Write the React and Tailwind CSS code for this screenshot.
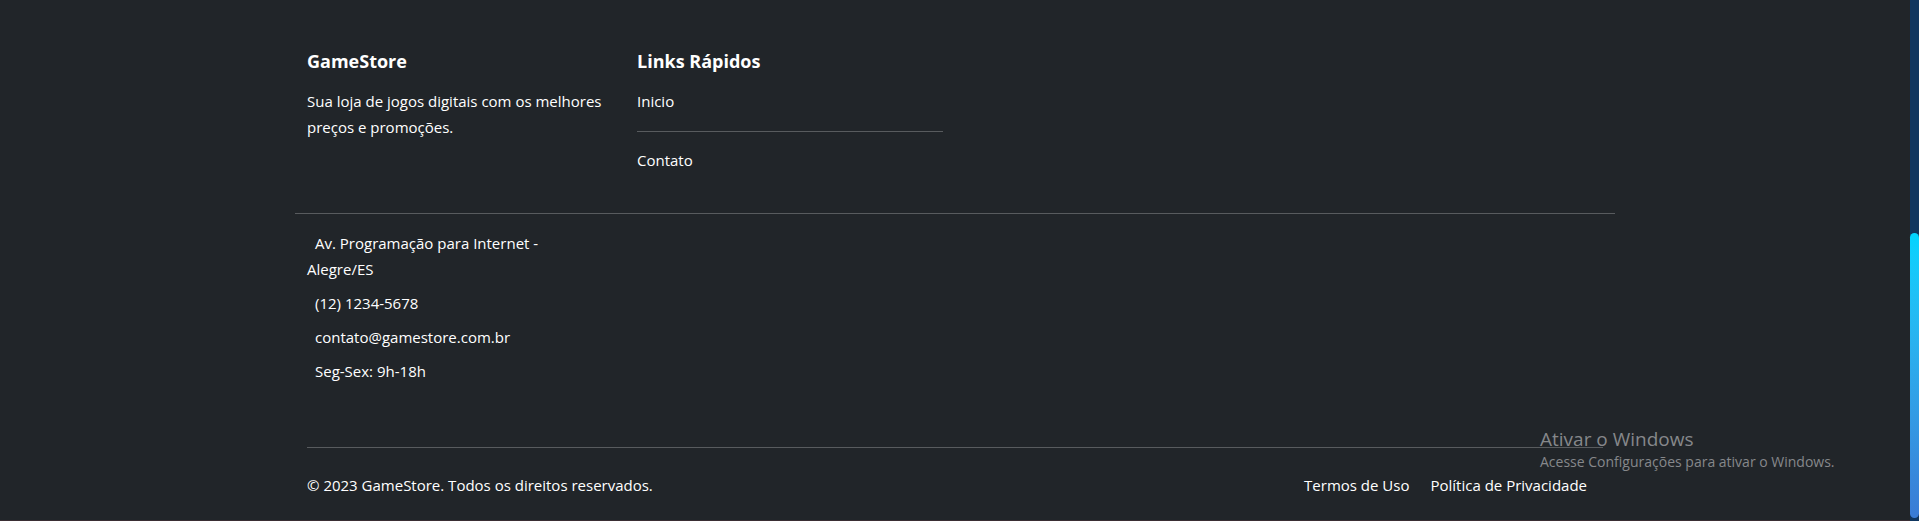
import React from "react";

export default function App() {
  const links = ["Inicio", "Contato"];

  const contacts = [
    "Av. Programação para Internet - Alegre/ES",
    "(12) 1234-5678",
    "contato@gamestore.com.br",
    "Seg-Sex: 9h-18h",
  ];

  return (
    <div
      className="flex h-[521px] w-full overflow-hidden bg-[#212529] text-white"
      style={{ fontFamily: '"Open Sans", "Noto Sans", sans-serif' }}
    >
      <div className="relative flex-1 border-b border-[#3a2e34]">
        <footer className="mx-auto w-[1320px] px-3 pt-[49px] text-[15px] leading-[25.6px]">
          {/* top row */}
          <div className="flex mb-[40px]">
            <div className="w-[330px] pr-6">
              <h5 className="text-[18px] leading-[24px] font-bold mb-4">GameStore</h5>
              <p>Sua loja de jogos digitais com os melhores preços e promoções.</p>
            </div>
            <div className="w-[306px]">
              <h5 className="text-[18px] leading-[24px] font-bold mb-4">Links Rápidos</h5>
              <ul>
                <li>
                  <a href="#">{links[0]}</a>
                </li>
                <li className="my-4 h-px bg-white/25"></li>
                <li>
                  <a href="#">{links[1]}</a>
                </li>
              </ul>
            </div>
          </div>

          <hr className="-mx-3 border-0 h-px bg-white/25" />

          {/* contact */}
          <ul className="mt-[17px] w-[292px]">
            {contacts.map((c) => (
              <li key={c} className="mb-[8.5px]">
                <span className="inline-block mr-2"></span>
                {c}
              </li>
            ))}
          </ul>

          <hr className="mt-[62px] border-0 h-px bg-white/25" />

          <div className="flex items-center justify-between pt-[25px]">
            <p>© 2023 GameStore. Todos os direitos reservados.</p>
            <ul className="flex gap-[21px] pr-4">
              <li>
                <a href="#">Termos de Uso</a>
              </li>
              <li>
                <a href="#">Política de Privacidade</a>
              </li>
            </ul>
          </div>
        </footer>

        {/* windows activation watermark */}
        <div className="absolute left-[1540px] top-[427px] text-[#86888b] pointer-events-none">
          <div className="text-[19px] leading-[25px]">Ativar o Windows</div>
          <div className="text-[14px] leading-[20px]">Acesse Configurações para ativar o Windows.</div>
        </div>
      </div>

      {/* scrollbar */}
      <div className="flex w-[9px] flex-col bg-[#10365f] pt-[233px] pb-[3px]">
        <div className="h-full rounded-full bg-gradient-to-b from-[#00d4ff] to-[#3a7bd5]"></div>
      </div>
    </div>
  );
}
